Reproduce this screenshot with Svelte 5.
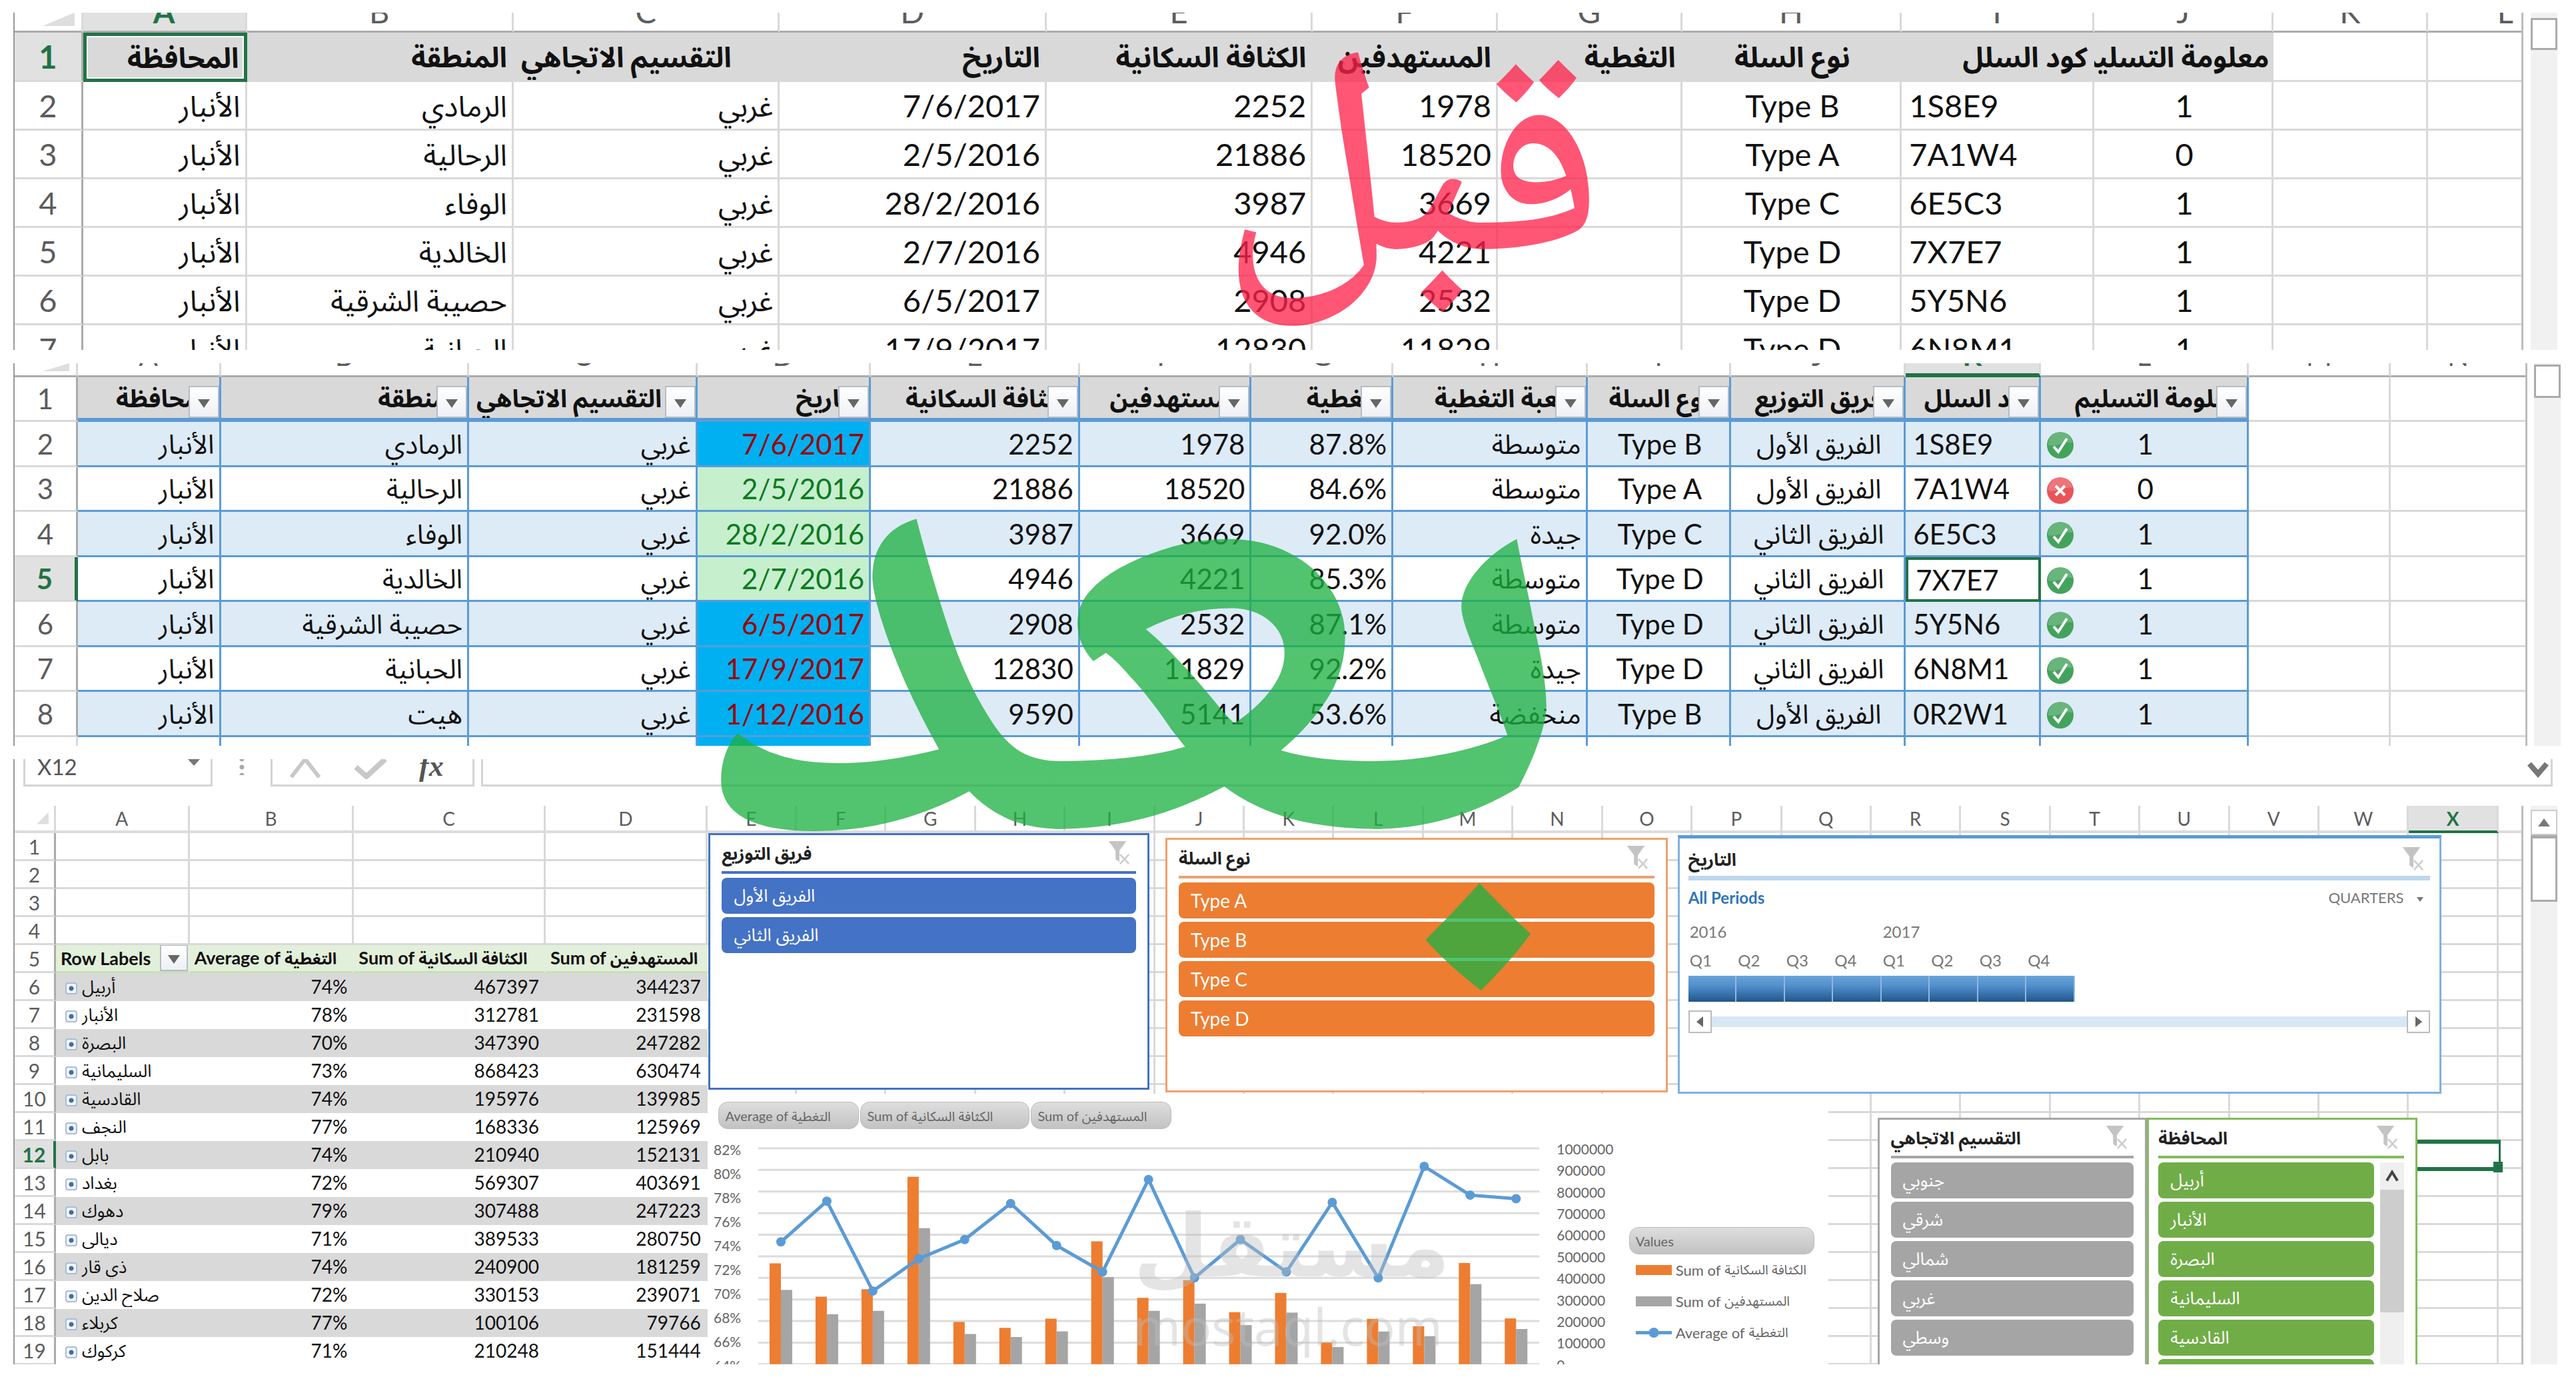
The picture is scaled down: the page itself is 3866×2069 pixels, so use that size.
<script>
	const ANBAR = 'الأنبار';
	const WEST = 'غربي';

	// column widths are shares of the sheet width
	const beforeCols = [103, 246, 401, 400, 401, 400, 278, 277, 330, 289, 270, 232, 140];
	const beforeLetters = ['', 'A', 'B', 'C', 'D', 'E', 'F', 'G', 'H', 'I', 'J', 'K', 'L'];
	const beforeHead = [
		['المحافظة', 'end'],
		['المنطقة', 'end'],
		['التقسيم الاتجاهي', 'start'],
		['التاريخ', 'end'],
		['الكثافة السكانية', 'end'],
		['المستهدفين', 'end'],
		['التغطية', 'end'],
		['نوع السلة', 'mid'],
		['كود السلل', 'end'],
		['معلومة التسليم', 'end']
	];

	const rows = [
		{ n: 2, area: 'الرمادي', date: '7/6/2017', pop: 2252, target: 1978, cover: '87.8%', level: 'متوسطة', type: 'Type B', team: 'الفريق الأول', code: '1S8E9', ok: 1, tone: 'late' },
		{ n: 3, area: 'الرحالية', date: '2/5/2016', pop: 21886, target: 18520, cover: '84.6%', level: 'متوسطة', type: 'Type A', team: 'الفريق الأول', code: '7A1W4', ok: 0, tone: 'early' },
		{ n: 4, area: 'الوفاء', date: '28/2/2016', pop: 3987, target: 3669, cover: '92.0%', level: 'جيدة', type: 'Type C', team: 'الفريق الثاني', code: '6E5C3', ok: 1, tone: 'early' },
		{ n: 5, area: 'الخالدية', date: '2/7/2016', pop: 4946, target: 4221, cover: '85.3%', level: 'متوسطة', type: 'Type D', team: 'الفريق الثاني', code: '7X7E7', ok: 1, tone: 'early' },
		{ n: 6, area: 'حصيبة الشرقية', date: '6/5/2017', pop: 2908, target: 2532, cover: '87.1%', level: 'متوسطة', type: 'Type D', team: 'الفريق الثاني', code: '5Y5N6', ok: 1, tone: 'late' },
		{ n: 7, area: 'الحبانية', date: '17/9/2017', pop: 12830, target: 11829, cover: '92.2%', level: 'جيدة', type: 'Type D', team: 'الفريق الثاني', code: '6N8M1', ok: 1, tone: 'late' },
		{ n: 8, area: 'هيت', date: '1/12/2016', pop: 9590, target: 5141, cover: '53.6%', level: 'منخفضة', type: 'Type B', team: 'الفريق الأول', code: '0R2W1', ok: 1, tone: 'late' }
	];

	const afterCols = [95, 215, 373, 343, 261, 314, 258, 213, 292, 216, 262, 203, 313, 213, 202];
	const afterLetters = ['', 'A', 'B', 'C', 'D', 'E', 'F', 'G', 'H', 'I', 'J', 'K', 'L', 'M', 'N'];
	const afterHead = [
		['المحافظة', 'end'],
		['المنطقة', 'end'],
		['التقسيم الاتجاهي', 'start'],
		['التاريخ', 'end'],
		['الكثافة السكانية', 'end'],
		['المستهدفين', 'end'],
		['التغطية', 'end'],
		['شعبة التغطية', 'end'],
		['نوع السلة', 'mid'],
		['فريق التوزيع', 'mid'],
		['كود السلل', 'end'],
		['معلومة التسليم', 'end']
	];

	const dashLetters = 'EFGHIJKLMNOPQRSTUVWX'.split('');
	const dashCols = [62, 201, 247, 288, 243, ...dashLetters.map(() => 134.6), 34];
	const pivot = [
		['أربيل', '74%', 467397, 344237],
		['الأنبار', '78%', 312781, 231598],
		['البصرة', '70%', 347390, 247282],
		['السليمانية', '73%', 868423, 630474],
		['القادسية', '74%', 195976, 139985],
		['النجف', '77%', 168336, 125969],
		['بابل', '74%', 210940, 152131],
		['بغداد', '72%', 569307, 403691],
		['دهوك', '79%', 307488, 247223],
		['ديالى', '71%', 389533, 280750],
		['ذي قار', '74%', 240900, 181259],
		['صلاح الدين', '72%', 330153, 239071],
		['كربلاء', '77%', 100106, 79766],
		['كركوك', '71%', 210248, 151444]
	];

	const slicers = [
		{ name: 'team', title: 'فريق التوزيع', items: ['الفريق الأول', 'الفريق الثاني'], x: 1042, y: 41, w: 662, h: 385 },
		{ name: 'type', title: 'نوع السلة', items: ['Type A', 'Type B', 'Type C', 'Type D'], x: 1728, y: 48, w: 754, h: 382 },
		{ name: 'region', title: 'التقسيم الاتجاهي', items: ['جنوبي', 'شرقي', 'شمالي', 'غربي', 'وسطي'], x: 2797, y: 468, w: 405, h: 440 },
		{ name: 'city', title: 'المحافظة', items: ['أربيل', 'الأنبار', 'البصرة', 'السليمانية', 'القادسية', 'النجف'], x: 3202, y: 468, w: 406, h: 440 }
	];

	// chart series, three provinces more than the visible part of the pivot
	const people = [...pivot.map((p) => p[2]), 176000, 469000, 212000];
	const targets = [...pivot.map((p) => p[3]), 130000, 371000, 163000];
	const average = [74.2, 77.6, 70.1, 72.8, 74.4, 77.4, 73.9, 71.7, 79.4, 71.2, 74.4, 71.7, 77.5, 71.2, 80.5, 78.1, 77.8];
	const barHeight = (v) => (v / 1000000) * 324;
	const pointX = (i) => 110 + i * 69;
	const pointY = (v) => 20 + (82 - v) * 18;
	const line = average.map((v, i) => `${pointX(i)},${pointY(v)}`).join(' ');

	const share = (w, cols) => (w / cols.reduce((a, b) => a + b, 0)) * 100;
	const place = (b) => `left:${(b.x / 3767) * 100}%;width:${(b.w / 3767) * 100}%;top:${b.y}px;height:${b.h}px`;
</script>

{#snippet widths(cols)}
	<colgroup>
		{#each cols as w}
			<col style="width:{share(w, cols)}%" />
		{/each}
	</colgroup>
{/snippet}

{#snippet funnel()}
	<svg class="funnel" viewBox="0 0 36 40" aria-hidden="true">
		<path d="M2 1h28L19 16v18l-6-4V16z" fill="#c4c4c4" />
		<path d="M20 22l14 15M34 22L20 37" stroke="#cfcfcf" stroke-width="3" />
	</svg>
{/snippet}

{#snippet scrollbar()}
	<div class="scrollbar"><div class="thumb"></div></div>
{/snippet}

<main class="page">
	<section class="sheet before">
		<table>
			{@render widths(beforeCols)}
			<thead>
				<tr class="letters">
					{#each beforeLetters as l, i}
						<th class:picked={l === 'A'}>
							{#if i === 0}<span class="corner"></span>{:else}<span class="letter">{l}</span>{/if}
						</th>
					{/each}
				</tr>
			</thead>
			<tbody>
				<tr class="titles">
					<th class="num picked">1</th>
					{#each beforeHead as [text, side], i}
						<th class="{side} title" class:cursor={i === 0} dir="rtl">{text}</th>
					{/each}
					<td></td>
					<td></td>
				</tr>
				{#each rows.slice(0, 6) as r}
					<tr>
						<th class="num">{r.n}</th>
						<td class="end ar">{ANBAR}</td>
						<td class="end ar">{r.area}</td>
						<td class="end ar">{WEST}</td>
						<td class="end">{r.date}</td>
						<td class="end">{r.pop}</td>
						<td class="end">{r.target}</td>
						<td></td>
						<td class="mid">{r.type}</td>
						<td class="start">{r.code}</td>
						<td class="mid">{r.ok}</td>
						<td></td>
						<td></td>
					</tr>
				{/each}
			</tbody>
		</table>
		{@render scrollbar()}
	</section>

	<section class="sheet after">
		<table>
			{@render widths(afterCols)}
			<thead>
				<tr class="letters">
					{#each afterLetters as l, i}
						<th class:picked={l === 'K'}>
							{#if i === 0}<span class="corner"></span>{:else}<span class="letter">{l}</span>{/if}
						</th>
					{/each}
				</tr>
			</thead>
			<tbody>
				<tr class="titles">
					<th class="num">1</th>
					{#each afterHead as [text, side]}
						<th class="{side} title">
							{text}
							<button class="filter" aria-label="Filter"></button>
						</th>
					{/each}
					<td></td>
					<td></td>
				</tr>
				{#each rows as r, i}
					<tr class="data" class:band={i % 2 === 0}>
						<th class="num" class:picked={r.n === 5}>{r.n}</th>
						<td class="end ar">{ANBAR}</td>
						<td class="end ar">{r.area}</td>
						<td class="end ar">{WEST}</td>
						<td class="end {r.tone}">{r.date}</td>
						<td class="end">{r.pop}</td>
						<td class="end">{r.target}</td>
						<td class="end">{r.cover}</td>
						<td class="end ar">{r.level}</td>
						<td class="mid">{r.type}</td>
						<td class="mid ar">{r.team}</td>
						<td class="start" class:cursor={r.n === 5}>{r.code}</td>
						<td class="mid status">
							<svg viewBox="0 0 42 42" aria-hidden="true">
								<circle cx="21" cy="21" r="20" fill={r.ok ? '#43a35c' : '#e8545a'} />
								<path d="M3 21a18 18 0 0 1 36-4C28 14 18 24 3 21z" fill="#fff" opacity="0.2" />
								{#if r.ok}
									<path d="M11 23l7 8 13-20" fill="none" stroke="#fff" stroke-width="4" />
								{:else}
									<path d="M14 14l14 14M28 14L14 28" stroke="#fff" stroke-width="4" />
								{/if}
							</svg>
							{r.ok}
						</td>
						<td></td>
						<td></td>
					</tr>
				{/each}
				<tr class="data">
					{#each afterCols as _, i}
						<td class:late={i === 4}></td>
					{/each}
				</tr>
			</tbody>
		</table>
		{@render scrollbar()}
	</section>

	<section class="sheet dash">
		<div class="formula">
			<div class="namebox">
				<input aria-label="Name box" value="X12" />
				<i class="caret"></i>
			</div>
			<span class="dots"></span>
			<div class="tools">
				<button aria-label="Cancel">
					<svg viewBox="0 0 48 30"><path d="M24 0L3 27M24 0l21 27" fill="none" stroke="#c8c8c8" stroke-width="6" /></svg>
				</button>
				<button aria-label="Enter">
					<svg viewBox="0 0 48 30"><path d="M2 12l16 14L46 0" fill="none" stroke="#c8c8c8" stroke-width="8" /></svg>
				</button>
				<button class="fx">fx</button>
			</div>
			<div class="entry">
				<svg viewBox="0 0 32 24" aria-hidden="true"><path d="M3 3l13 15L29 3" fill="none" stroke="#777" stroke-width="8" /></svg>
			</div>
		</div>

		<div class="workspace">
			<div class="canvas">
				<table>
					{@render widths(dashCols)}
					<thead>
						<tr class="letters">
							<th><span class="corner"></span></th>
							{#each ['A', 'B', 'C', 'D', ...dashLetters] as l}
								<th class:picked={l === 'X'}>{l}</th>
							{/each}
							<th></th>
						</tr>
					</thead>
					<tbody>
						{#each [1, 2, 3, 4] as n}
							<tr>
								<th class="num">{n}</th>
								{#each dashCols.slice(1) as _}<td></td>{/each}
							</tr>
						{/each}
						<tr class="heads">
							<th class="num">5</th>
							<th>Row Labels<button class="filter" aria-label="Filter"></button></th>
							<th>Average of <span class="ar">التغطية</span></th>
							<th>Sum of <span class="ar">الكثافة السكانية</span></th>
							<th>Sum of <span class="ar">المستهدفين</span></th>
							{#each dashCols.slice(5) as _}<td></td>{/each}
						</tr>
						{#each pivot as [city, pct, pop, target], i}
							<tr class="pivot" class:shade={i % 2 === 0}>
								<th class="num" class:picked={i === 6}>{i + 6}</th>
								<td class="city"><button class="plus" aria-label="Expand"></button><span class="ar">{city}</span></td>
								<td class="end">{pct}</td>
								<td class="end">{pop}</td>
								<td class="end">{target}</td>
								{#each dashCols.slice(5) as _}<td></td>{/each}
							</tr>
						{/each}
					</tbody>
				</table>

				<div class="active" style={place({ x: 3597, y: 501, w: 136, h: 47 })}></div>

				<div class="chart" style={place({ x: 1041, y: 432, w: 1682, h: 476 })}>
					<div class="pills">
						<button>Average of <span class="ar">التغطية</span></button>
						<button class="wide">Sum of <span class="ar">الكثافة السكانية</span></button>
						<button>Sum of <span class="ar">المستهدفين</span></button>
					</div>
					<div class="chart-body">
						<svg class="plot" viewBox="0 0 1370 344">
							{#each Array(11) as _, i}
								<line x1="76" x2="1249" y1={20 + i * 32.4} y2={20 + i * 32.4} stroke="#dcdcdc" stroke-width="3" />
								<text x="1275" y={29 + i * 32.4}>{(10 - i) * 100000}</text>
							{/each}
							{#each Array(10) as _, i}
								<text x="9" y={30 + i * 36}>{82 - i * 2}%</text>
							{/each}
							{#each people as v, i}
								<rect x={93 + i * 69} y={344 - barHeight(v)} width="17" height={barHeight(v)} fill="#ed7d31" />
								<rect x={110 + i * 69} y={344 - barHeight(targets[i])} width="17" height={barHeight(targets[i])} fill="#a5a5a5" />
							{/each}
							<polyline points={line} fill="none" stroke="#5b9bd5" stroke-width="5" />
							{#each average as v, i}
								<circle cx={pointX(i)} cy={pointY(v)} r="7" fill="#5b9bd5" />
							{/each}
						</svg>
						<div class="legend">
							<button>Values</button>
							<p><i class="swatch people"></i>Sum of <span class="ar">الكثافة السكانية</span></p>
							<p><i class="swatch target"></i>Sum of <span class="ar">المستهدفين</span></p>
							<p><i class="swatch avg"></i>Average of <span class="ar">التغطية</span></p>
						</div>
					</div>
				</div>

				{#each slicers as s}
					<div class="slicer {s.name}" style={place(s)}>
						<header><h2>{s.title}</h2>{@render funnel()}</header>
						<div class="slicer-body">
							<div class="items">
								{#each s.items as item}<button>{item}</button>{/each}
							</div>
							{#if s.name === 'city'}
								<div class="rail">
									<svg viewBox="0 0 36 40" aria-hidden="true"><path d="M10 27l8-13 8 13" fill="none" stroke="#444" stroke-width="4" /></svg>
									<div></div>
								</div>
							{/if}
						</div>
					</div>
				{/each}

				<div class="timeline" style={place({ x: 2497, y: 44, w: 1147, h: 388 })}>
					<header><h2>التاريخ</h2>{@render funnel()}</header>
					<div class="period">
						<a href="#all">All Periods</a>
						<button>QUARTERS <i class="caret"></i></button>
					</div>
					<div class="years"><span>2016</span><span>2017</span></div>
					<div class="quarters">
						{#each [1, 2, 3, 4, 1, 2, 3, 4] as q}
							<div><span>Q{q}</span><i></i></div>
						{/each}
					</div>
					<div class="slide">
						<button aria-label="Back"><i class="back"></i></button>
						<div></div>
						<button aria-label="Forward"><i class="next"></i></button>
					</div>
				</div>
			</div>
			<div class="scrollbar">
				<button aria-label="Up"><i></i></button>
				<div class="thumb"></div>
			</div>
		</div>
	</section>

	<div class="brand">
		<span>مستقل</span>
		<span class="domain">mostaql.com</span>
	</div>
	<div class="stamp red">قبل</div>
	<div class="stamp green">بعد</div>
</main>

<style>
	:global(body) {
		margin: 0;
		background: #fff;
	}
	.page {
		position: relative;
		box-sizing: border-box;
		display: flex;
		flex-direction: column;
		gap: 20px;
		min-height: 100vh;
		padding: 19px 18px 22px 20px;
		overflow: hidden;
		font-family: Lato, 'Noto Sans Arabic', 'DejaVu Sans', sans-serif;
		color: #111;
	}
	.page * {
		box-sizing: border-box;
	}
	button,
	input {
		font: inherit;
		color: inherit;
		border: 0;
		padding: 0;
		background: none;
	}
	.sheet {
		position: relative;
		display: flex;
		gap: 11px;
		padding-right: 10px;
		border-left: 2px solid #999;
		overflow: hidden;
	}
	table {
		flex: 1;
		width: 100%;
		min-width: 0;
		align-self: flex-start;
		table-layout: fixed;
		border-collapse: separate;
		border-spacing: 0;
		border-right: 3px solid #bdbdbd;
	}
	th,
	td {
		padding: 0 7px 0 11px;
		border-right: 3px solid #d9d9d9;
		border-bottom: 3px solid #d9d9d9;
		line-height: 40px;
		white-space: nowrap;
		overflow: hidden;
	}
	th {
		font-weight: 400;
	}
	tr > :last-child {
		border-right: 0;
	}
	.end {
		text-align: right;
	}
	.start {
		text-align: left;
	}
	.mid {
		text-align: center;
	}
	.num {
		padding: 0;
		text-align: center;
		color: #5c5c5c;
		border-right-color: #ababab;
	}
	.letters th {
		padding: 0;
		color: #5c5c5c;
		vertical-align: top;
		border-bottom: 3px solid #ababab;
	}
	.letters .picked,
	.num.picked {
		background: #e1e1e1;
		color: #217346;
		font-weight: 700;
	}
	.title {
		background: #d9d9d9;
		font-weight: 700;
	}
	.letter {
		display: block;
		line-height: 40px;
	}
	.corner {
		display: block;
		margin-left: auto;
		background: #dedede;
		clip-path: polygon(100% 0, 100% 100%, 0 100%);
	}
	.scrollbar {
		width: 40px;
		background: #f1f1f1;
		flex: none;
	}
	.thumb {
		background: #fff;
		border: 3px solid #ababab;
	}

	/* raw sheet */
	.before {
		height: 506px;
		font-size: 47px;
	}
	.before th,
	.before td {
		height: 73px;
	}
	.before .letters th {
		height: 30px;
	}
	.before .letters th:last-child {
		padding-right: 12px;
		text-align: right;
	}
	.before .letter {
		margin-top: -22px;
	}
	.before .corner {
		width: 48px;
		height: 20px;
		margin-right: 10px;
	}
	.before .titles th,
	.before .titles td {
		height: 74px;
	}
	.before .title {
		border-color: #d9d9d9;
		font-size: 42px;
	}
	.before .ar {
		font-size: 44px;
	}
	.before .title.cursor {
		border: 5px solid #217346;
		outline: 2px solid #fff;
		outline-offset: -7px;
	}
	.before .thumb {
		height: 48px;
		margin-top: 8px;
	}

	/* formatted sheet */
	.after {
		height: 574px;
		gap: 10px;
		padding-right: 5px;
		font-size: 42px;
	}
	.after th,
	.after td {
		height: 67px;
	}
	.after tr:nth-child(even) td {
		height: 68px;
	}
	.after .letters th {
		height: 21px;
	}
	.after .letter {
		line-height: 30px;
		margin-top: -27px;
	}
	.after .letters .picked {
		border-bottom: 6px solid #217346;
	}
	.after .corner {
		width: 40px;
		height: 12px;
		margin-right: 10px;
	}
	.after .titles .title {
		position: relative;
		font-size: 37px;
		border-right-color: #5b9bd5;
		border-bottom: 6px solid #5b9bd5;
	}
	.after .ar {
		font-size: 40px;
	}
	.after .data td:nth-child(n + 2):nth-child(-n + 13) {
		border-color: #5b9bd5;
	}
	.after .band td:nth-child(n + 2):nth-child(-n + 13) {
		background: #ddebf7;
	}
	.after .data td.late:nth-child(5) {
		background: #00b0f0;
		color: #9c0006;
	}
	.after .data td.early:nth-child(5) {
		background: #c6efce;
		color: #0b7a1e;
	}
	.after .num.picked {
		border-right: 5px solid #217346;
	}
	.after .data td.cursor:nth-child(12) {
		border: 4px solid #217346;
	}
	.after .data .status {
		position: relative;
	}
	.status svg {
		position: absolute;
		left: 8px;
		top: 14px;
		width: 42px;
		height: 42px;
	}
	.after .thumb {
		height: 50px;
		margin-top: 2px;
	}
	.filter {
		position: absolute;
		right: 0;
		bottom: 0;
		width: 46px;
		height: 48px;
		border: 2px solid #b5bcc6;
		background: linear-gradient(#fff, #eef0f4);
	}
	.filter::after {
		content: '';
		display: block;
		width: 0;
		margin: 4px auto 0;
		border: 9px solid transparent;
		border-top: 13px solid #666;
		border-bottom: 0;
	}

	/* dashboard */
	.dash {
		height: 908px;
		flex-direction: column;
		gap: 29px;
		font-size: 28px;
	}
	.formula {
		display: flex;
		height: 41px;
		padding-left: 13px;
		padding-right: 7px;
		flex: none;
	}
	.formula > div {
		border: 3px solid #d4d4d4;
		border-top: 0;
	}
	.namebox {
		display: flex;
		width: 284px;
	}
	.namebox input {
		width: 230px;
		height: 41px;
		padding: 0 0 20px 18px;
		font-size: 33px;
		color: #555;
	}
	.caret {
		display: inline-block;
		width: 0;
		height: 0;
		margin-left: 14px;
		border: 9px solid transparent;
		border-top: 10px solid #777;
		border-bottom: 0;
	}
	.dots {
		width: 87px;
		height: 24px;
		background: radial-gradient(circle, #aaa 3px, transparent 4px) center / 12px 12px;
		background-repeat: repeat-y;
	}
	.tools {
		display: flex;
		align-items: flex-start;
		width: 306px;
		padding-left: 24px;
		gap: 48px;
	}
	.tools svg {
		width: 50px;
		height: 30px;
		display: block;
	}
	.fx {
		margin-top: -9px;
		font: italic 700 44px/40px 'Liberation Serif', serif;
		color: #555;
	}
	.entry {
		flex: 1;
		margin-left: 10px;
		text-align: right;
	}
	.entry svg {
		width: 34px;
		height: 24px;
		margin-right: 2px;
	}
	.workspace {
		display: flex;
		gap: 11px;
		height: 838px;
	}
	/* floating objects are measured from the corner of this canvas */
	.canvas {
		position: relative;
		flex: 1;
		min-width: 0;
	}
	.dash th,
	.dash td {
		height: 42px;
		padding: 0 7px;
		line-height: 34px;
	}
	.dash .num {
		padding: 0;
		font-size: 30px;
	}
	.dash .letters th {
		height: 41px;
		padding: 0;
		vertical-align: middle;
		border-bottom: 4px solid #dcdcdc;
	}
	.dash .letters .picked {
		border-bottom-color: #217346;
	}
	.dash .corner {
		width: 18px;
		height: 18px;
		margin-right: 8px;
	}
	.dash .heads th:not(.num) {
		position: relative;
		background: #e2efda;
		border-right-color: #e2efda;
		border-bottom-color: #c6e0b4;
		font-weight: 700;
		text-align: left;
		font-size: 27px;
	}
	.dash .ar {
		font-size: 24px;
	}
	.dash .city .ar {
		font-size: 26px;
	}
	.dash .filter {
		width: 42px;
		height: 40px;
	}
	.pivot td:nth-child(-n + 5) {
		border-color: transparent;
		background-clip: border-box;
	}
	.shade td:nth-child(-n + 5) {
		background: #d9d9d9;
	}
	.dash .num.picked {
		border-right: 4px solid #217346;
	}
	.dash .city {
		padding-left: 14px;
	}
	.plus {
		width: 18px;
		height: 18px;
		margin-right: 7px;
		border: 2px solid #a9bdd6;
		border-radius: 4px;
		background: radial-gradient(circle, #466a9a 3px, #eef4fb 4px);
	}
	.dash .scrollbar {
		padding-top: 6px;
	}
	.dash .scrollbar button {
		display: block;
		width: 40px;
		height: 38px;
		border: 2px solid #ccc;
		background: #fff;
	}
	.dash .scrollbar i {
		display: block;
		width: 0;
		margin: auto;
		border: 9px solid transparent;
		border-bottom: 12px solid #777;
		border-top: 0;
	}
	.dash .thumb {
		height: 100px;
		border-top-width: 5px;
	}
	.active,
	.chart,
	.slicer,
	.timeline {
		position: absolute;
		background: #fff;
	}
	.active {
		border: 6px solid #217346;
		border-right-width: 3px;
	}
	.active::after {
		content: '';
		position: absolute;
		right: -6px;
		bottom: -8px;
		width: 14px;
		height: 16px;
		background: #217346;
	}
	.slicer {
		display: flex;
		flex-direction: column;
		padding: 6px 17px 0;
		border: 3px solid #4472c4;
		overflow: hidden;
	}
	.slicer header,
	.timeline header {
		display: flex;
		align-items: center;
		justify-content: space-between;
		height: 52px;
		flex: none;
		border-bottom: 4px solid #4472c4;
	}
	.slicer header {
		padding-bottom: 6px;
	}
	h2 {
		margin: 0;
		font-size: 26px;
		line-height: 36px;
		font-weight: 700;
		color: #222;
	}
	.funnel {
		width: 36px;
		height: 38px;
		margin-right: 8px;
	}
	.slicer-body {
		display: flex;
		gap: 9px;
		padding-top: 6px;
	}
	.items {
		display: flex;
		flex: 1;
		flex-direction: column;
		gap: 5px;
	}
	.items button {
		height: 54px;
		flex: none;
		padding: 0 18px;
		border-radius: 8px;
		background: #4472c4;
		color: #fff;
		font-size: 26px;
		text-align: left;
	}
	.type .items button {
		font-size: 28px;
	}
	.slicer.type,
	.type header {
		border-color: #f0a06a;
	}
	.type .items button {
		background: #ed7d31;
	}
	.slicer.region,
	.region header {
		border-color: #a5a5a5;
	}
	.region .items button {
		background: #a5a5a5;
	}
	.slicer.city,
	.city header {
		border-color: #83bb5c;
	}
	.slicer.city .items button {
		background: #70ad47;
	}
	.slicer.region,
	.slicer.city {
		border-bottom: 0;
	}
	.rail {
		width: 36px;
		background: #efefef;
	}
	.rail svg {
		display: block;
		width: 36px;
		height: 41px;
	}
	.rail div {
		height: 184px;
		background: #cdcdcd;
	}
	.timeline {
		padding: 6px 14px 0 13px;
		border: 3px solid #7fb0e0;
		border-top: 5px solid #5b9bd5;
		color: #777;
		font-size: 24px;
		line-height: 30px;
	}
	.timeline header {
		height: 57px;
		border-bottom: 7px solid #bdd7ee;
	}
	.period {
		display: flex;
		justify-content: space-between;
		padding: 11px 10px 0 0;
	}
	.period a {
		color: #2e75b6;
		font-weight: 700;
		text-decoration: none;
	}
	.period button {
		font-size: 22px;
	}
	.period .caret {
		border-width: 5px;
		border-top-width: 7px;
		margin-bottom: 2px;
	}
	.years {
		display: grid;
		grid-template-columns: 290px 1fr;
		padding: 21px 0 0 2px;
	}
	.quarters {
		display: flex;
		width: 580px;
		padding-top: 13px;
	}
	.quarters div {
		flex: 1;
	}
	.quarters span {
		padding-left: 2px;
	}
	.quarters i {
		display: block;
		height: 39px;
		margin-top: 8px;
		border-right: 2px solid #8db9e4;
		background: linear-gradient(#6aa3da, #4f8fcb 40%, #22558a);
	}
	.slide {
		display: flex;
		align-items: center;
		margin-top: 13px;
	}
	.slide div {
		flex: 1;
		height: 16px;
		background: #d8e7f4;
	}
	.slide button {
		width: 35px;
		height: 34px;
		border: 2px solid #bbb;
		background: #fff;
	}
	.slide i {
		display: block;
		width: 0;
		margin: auto;
		border: 8px solid transparent;
	}
	.slide .back {
		border-right: 10px solid #666;
		border-left: 0;
	}
	.slide .next {
		border-left: 10px solid #666;
		border-right: 0;
	}
	.chart {
		padding-top: 12px;
		color: #666;
		overflow: hidden;
	}
	.pills {
		display: flex;
		gap: 2px;
		padding-left: 16px;
	}
	.pills button,
	.legend button {
		width: 211px;
		height: 41px;
		padding: 0 9px;
		border: 1px solid #bbb;
		border-radius: 14px;
		background: linear-gradient(#dedede, #c2c2c2);
		font-size: 20px;
		line-height: 24px;
		text-align: left;
		white-space: nowrap;
		overflow: hidden;
	}
	.pills .wide {
		width: 254px;
	}
	.pills .ar,
	.legend .ar {
		font-size: 20px;
	}
	.chart-body {
		display: flex;
		gap: 13px;
		padding-top: 9px;
	}
	.plot {
		flex: 1370;
		min-width: 0;
		align-self: flex-start;
	}
	.plot text {
		font-size: 21px;
		fill: #666;
	}
	.legend {
		flex: 299;
		min-width: 0;
		padding-top: 138px;
	}
	.legend button {
		display: block;
		width: 278px;
	}
	.legend p {
		display: flex;
		align-items: center;
		gap: 6px;
		height: 47px;
		margin: 0;
		padding-left: 10px;
		font-size: 22px;
		white-space: nowrap;
	}
	.swatch {
		width: 54px;
		height: 15px;
		flex: none;
		background: #ed7d31;
	}
	.swatch.target {
		background: #a5a5a5;
	}
	.swatch.avg {
		background:
			radial-gradient(circle, #5b9bd5 7px, transparent 8px),
			linear-gradient(transparent 5px, #5b9bd5 5px 10px, transparent 10px);
	}

	/* marks over the sheets */
	.brand {
		position: absolute;
		left: 44%;
		top: 1795px;
		width: 12%;
		text-align: center;
		font-family: 'DejaVu Sans', sans-serif;
		font-size: 130px;
		font-weight: 700;
		line-height: 150px;
		color: #bebebe;
		opacity: 0.4;
		white-space: nowrap;
	}
	.brand span {
		display: block;
	}
	.brand .domain {
		font-family: 'Noto Sans', sans-serif;
		font-size: 76px;
		font-weight: 400;
		line-height: 90px;
	}
	.stamp {
		position: absolute;
		font-family: 'Noto Naskh Arabic', Amiri, 'DejaVu Sans', serif;
		font-weight: 500;
		white-space: nowrap;
		line-height: 1;
		opacity: 0.76;
	}
	.red {
		left: 47%;
		top: 60px;
		padding-left: 12px;
		font-size: 440px;
		color: #ff224b;
	}
	.green {
		left: 27%;
		top: 438px;
		font-size: 1128px;
		color: #1db141;
	}
</style>
